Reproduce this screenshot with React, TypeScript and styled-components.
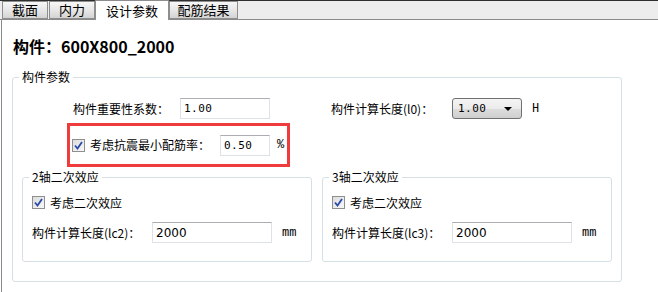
import React from 'react';
import styled, { createGlobalStyle } from 'styled-components';

const GlobalStyle = createGlobalStyle`
    html, body {
        margin: 0;
        padding: 0;
        background: #fff;
    }
    body {
        font-family: "Noto Sans CJK SC", "DejaVu Sans", sans-serif;
        font-size: 12px;
        color: #000;
    }
`;

const Window = styled.div`
    width: 658px;
    height: 292px;
    overflow: hidden;
    display: flex;
    flex-direction: column;
    background: #fff;
`;

const TabBar = styled.div`
    flex: none;
    height: 18px;
    display: flex;
    align-items: flex-end;
    padding-left: 2px;
    background: #ededed;
    border-top: 1px solid #2e2e2e;
    border-bottom: 1px solid #8a8a8a;
`;

const Tab = styled.div<{ $active?: boolean; $width: number; $gap?: number }>`
    box-sizing: border-box;
    width: ${props => props.$width}px;
    height: ${props => (props.$active ? 20 : 18)}px;
    margin-bottom: ${props => (props.$active ? -1 : 0)}px;
    margin-left: ${props => props.$gap || 0}px;
    display: flex;
    align-items: center;
    justify-content: center;
    border: 1px solid #8e8e8e;
    border-bottom: ${props => (props.$active ? 'none' : '1px solid #8e8e8e')};
    background: ${props =>
        props.$active ? '#fff' : 'linear-gradient(#f7f7f7, #e4e4e4 60%, #d3d3d3)'};
    font-size: 13px;
    line-height: 14px;
`;

const Body = styled.div`
    flex: 1;
    margin-left: 1px;
    border-left: 1px solid #8a8a8a;
    padding: 16px 10px 0 10px;
`;

const Title = styled.h1`
    margin: 0 0 13px 1px;
    font-size: 16px;
    line-height: 20px;
    font-weight: 700;
`;

const Group = styled.fieldset<{ $width: number; $pad: string }>`
    box-sizing: border-box;
    width: ${props => props.$width}px;
    min-width: 0;
    margin: 0;
    padding: ${props => props.$pad};
    border: 1px solid #d5dfe6;
    border-radius: 3px;
`;

const Legend = styled.legend`
    padding: 0 3px;
    margin-left: -3px;
    font-size: 12px;
    line-height: 16px;
`;

const Row = styled.div<{ $indent?: number; $top?: number }>`
    display: flex;
    align-items: center;
    padding-left: ${props => props.$indent || 0}px;
    margin-top: ${props => props.$top || 0}px;
`;

const Label = styled.span<{ $width: number; $gap?: number }>`
    flex: none;
    width: ${props => props.$width}px;
    margin-left: ${props => props.$gap || 0}px;
    white-space: nowrap;
    line-height: 16px;
`;

const TextBox = styled.input<{ $width: number; $mono?: boolean }>`
    box-sizing: border-box;
    flex: none;
    width: ${props => props.$width}px;
    height: 21px;
    margin: 0;
    padding: 0 3px;
    border: 1px solid #dde2e8;
    border-top-color: #abadb3;
    background: #fff;
    font-family: ${props =>
        props.$mono ? '"DejaVu Sans Mono", monospace' : '"DejaVu Sans", sans-serif'};
    font-size: ${props => (props.$mono ? 11 : 12)}px;
    letter-spacing: ${props => (props.$mono ? '0.5px' : '0')};
    color: #000;
    outline: none;
`;

const Unit = styled.span<{ $gap: number }>`
    margin-left: ${props => props.$gap}px;
    font-family: "Liberation Mono", monospace;
    font-size: 12px;
`;

const Select = styled.div`
    box-sizing: border-box;
    flex: none;
    width: 70px;
    height: 21px;
    display: flex;
    align-items: center;
    justify-content: space-between;
    padding: 0 9px 0 5px;
    border: 1px solid #707070;
    border-radius: 3px;
    background: linear-gradient(#f4f4f4, #ebebeb 50%, #dddddd 50%, #cfcfcf);
    font-family: "DejaVu Sans Mono", monospace;
    font-size: 11px;
    letter-spacing: 0.5px;
`;

const Arrow = styled.span`
    width: 0;
    height: 0;
    border-left: 4px solid transparent;
    border-right: 4px solid transparent;
    border-top: 4px solid #000;
`;

const Highlight = styled.div`
    box-sizing: border-box;
    width: 223px;
    height: 44px;
    margin: 4px 0 0 45px;
    padding-left: 2px;
    display: flex;
    align-items: center;
    border: 3px solid #ef3b3b;
`;

const Box = styled.span`
    box-sizing: border-box;
    flex: none;
    width: 13px;
    height: 13px;
    margin-right: 5px;
    border: 1px solid #8f8f8f;
    background: linear-gradient(135deg, #dcdcdc, #f8f8f8);
    display: flex;
    align-items: center;
    justify-content: center;
`;

const Axes = styled.div`
    display: flex;
    gap: 10px;
    margin-top: 2px;
`;

const Check = () => (
    <Box>
        <svg width="9" height="9" viewBox="0 0 9 9">
            <path d="M1 4.5 L3.5 7.5 L8 1" fill="none" stroke="#2a4aa8" strokeWidth="1.8" />
        </svg>
    </Box>
);

const AxisGroup = ({ axis, code }: { axis: string; code: string }) => (
    <Group $width={290} $pad="9px 9px 18px">
        <Legend>{axis}轴二次效应</Legend>
        <Row>
            <Check />
            <span>考虑二次效应</span>
        </Row>
        <Row $top={11}>
            <Label $width={120}>构件计算长度(l{code})：</Label>
            <TextBox $width={120} defaultValue="2000" readOnly />
            <Unit $gap={10}>mm</Unit>
        </Row>
    </Group>
);

const App = () => (
    <Window>
        <GlobalStyle />
        <TabBar>
            <Tab $width={46}>截面</Tab>
            <Tab $width={46} $gap={1}>内力</Tab>
            <Tab $width={74} $active>设计参数</Tab>
            <Tab $width={69}>配筋结果</Tab>
        </TabBar>
        <Body>
            <Title>构件：600X800_2000</Title>
            <Group $width={610} $pad="13px 9px 19px">
                <Legend>构件参数</Legend>
                <Row $indent={51}>
                    <Label $width={107}>构件重要性系数：</Label>
                    <TextBox $width={90} $mono defaultValue="1.00" readOnly />
                    <Label $width={121} $gap={61}>
                        构件计算长度(l0)：
                    </Label>
                    <Select>
                        <span>1.00</span>
                        <Arrow />
                    </Select>
                    <Unit $gap={10}>H</Unit>
                </Row>
                <Highlight>
                    <Check />
                    <Label $width={130}>考虑抗震最小配筋率：</Label>
                    <TextBox $width={50} $mono defaultValue="0.50" readOnly />
                    <Unit $gap={7}>%</Unit>
                </Highlight>
                <Axes>
                    <AxisGroup axis="2" code="c2" />
                    <AxisGroup axis="3" code="c3" />
                </Axes>
            </Group>
        </Body>
    </Window>
);

export default App;
